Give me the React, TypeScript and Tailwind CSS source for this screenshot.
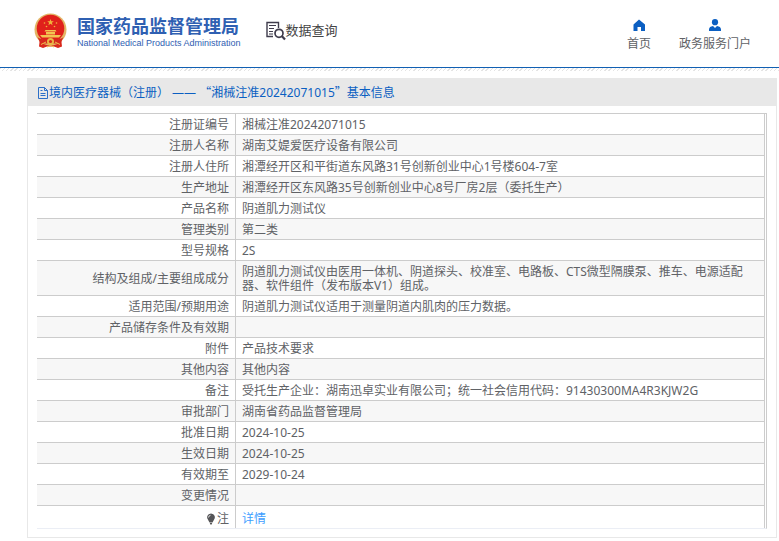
import type { ReactNode } from "react";

type Row = {
   label: string;
   value?: ReactNode;
};

const rows: Row[] = [
   { label: "注册证编号", value: "湘械注准20242071015" },
   { label: "注册人名称", value: "湖南艾媞爱医疗设备有限公司" },
   { label: "注册人住所", value: "湘潭经开区和平街道东风路31号创新创业中心1号楼604-7室" },
   { label: "生产地址", value: "湘潭经开区东风路35号创新创业中心8号厂房2层（委托生产）" },
   { label: "产品名称", value: "阴道肌力测试仪" },
   { label: "管理类别", value: "第二类" },
   { label: "型号规格", value: "2S" },
   { label: "结构及组成/主要组成成分", value: "阴道肌力测试仪由医用一体机、阴道探头、校准室、电路板、CTS微型隔膜泵、推车、电源适配器、软件组件（发布版本V1）组成。" },
   { label: "适用范围/预期用途", value: "阴道肌力测试仪适用于测量阴道内肌肉的压力数据。" },
   { label: "产品储存条件及有效期" },
   { label: "附件", value: "产品技术要求" },
   { label: "其他内容", value: "其他内容" },
   { label: "备注", value: "受托生产企业：湖南迅卓实业有限公司；统一社会信用代码：91430300MA4R3KJW2G" },
   { label: "审批部门", value: "湖南省药品监督管理局" },
   { label: "批准日期", value: "2024-10-25" },
   { label: "生效日期", value: "2024-10-25" },
   { label: "有效期至", value: "2029-10-24" },
   { label: "变更情况" },
];

const Emblem = () => (
   <svg viewBox="0 0 34 36" className="w-[34px] h-9 shrink-0" aria-hidden="true">
      <path d="M6 25h21l1 8.500-4 1.500-4-1.500h-7L9 35l-4-1.500z" fill="#d9281c" />
      <circle cx="16.500" cy="16.500" r="16" fill="#e3b565" />
      <circle cx="16.500" cy="15.500" r="13.800" fill="#e0201b" />
      <path d="M16.500 6l.9 2.300h2.400l-1.900 1.500.7 2.400-2.100-1.400-2.100 1.400.7-2.400-1.900-1.500h2.400z" fill="#f0b43c" />
      <circle cx="10.500" cy="10" r=".8" fill="#f0b43c" />
      <circle cx="22.500" cy="10" r=".8" fill="#f0b43c" />
      <circle cx="12.500" cy="13.500" r=".8" fill="#f0b43c" />
      <circle cx="20.500" cy="13.500" r=".8" fill="#f0b43c" />
      <path d="M11.500 17h10l1 1.500h-12zM12 19h9v2.500h-9zM6 22h21l-2 2.500H8z" fill="#f2c552" />
      <path d="M3.500 24c4 3.500 8 2 13 2s9 1.500 13-2l-3 6.500H6.500z" fill="#d6281d" />
      <circle cx="16.500" cy="28.500" r="3.500" fill="#e8b846" />
      <circle cx="16.500" cy="28.500" r="1.600" fill="#d9281c" />
      <path d="M7 31.500l5-2.500M26 31.500l-5-2.500M13 34l3.500-1.500L20 34" stroke="#efbf4b" strokeWidth="1" fill="none" />
   </svg>
);

const SearchDocIcon = () => (
   <svg viewBox="0 0 20 20" className="w-5 h-5 shrink-0" fill="none" stroke="#3f3c4c" aria-hidden="true">
      <path d="M12.500 7V1.500H1V15.500H7" strokeWidth="1.400" />
      <path d="M3 4.500h7M3 7.500h5M3 10.500h4M3 13h4" strokeWidth="1" />
      <circle cx="13" cy="12.300" r="4" strokeWidth="1.700" />
      <path d="M16 15.300L19 18.500" strokeWidth="2.200" />
   </svg>
);

const HomeIcon = () => (
   <svg viewBox="0 0 12 12" className="w-3 h-3" fill="#0b5fc2" aria-hidden="true">
      <path d="M6 .5L12 5.500V12H8V8H4.500v4H.5V5.500z" />
   </svg>
);

const UserIcon = () => (
   <svg viewBox="0 0 12 12" className="w-3 h-3" fill="#0b5fc2" aria-hidden="true">
      <circle cx="6" cy="3.200" r="3.100" />
      <path d="M0 12V10.500C0 8.500 1.500 7.300 4 7l2 2 2-2c2.500.3 4 1.500 4 3.500V12z" />
   </svg>
);

const DocIcon = () => (
   <svg viewBox="0 0 12 12" className="w-3 h-3 shrink-0" fill="none" stroke="#2c6fc8" aria-hidden="true">
      <path d="M1.500 .5h6l3 3v8h-9zM7.500 .5v3h3M3.500 3.500h2M3.500 6.500h5M3.500 8.500h5" />
   </svg>
);

const BulbIcon = () => (
   <svg viewBox="0 0 10 12" className="w-[10px] h-3" aria-hidden="true">
      <path d="M5 .5a4 4 0 0 1 2.600 7L6.500 9.500h-3L2.400 7.500A4 4 0 0 1 5 .5zM3.800 10h2.400l-.5 1.500H4.300z" fill="#555558" />
      <path d="M2.500 4.500A2.500 2.500 0 0 1 4.500 2.300" stroke="#ddd" fill="none" />
   </svg>
);

const TableRow = ({ head, children, last = false }: { head: ReactNode; children?: ReactNode; last?: boolean }) => {
   const border = last ? "border-r border-[#ccc] pt-[6px] pb-[2px]" : "border-r border-b border-[#ccc] pt-1 pb-[2px]";

   return (
      <tr className={last ? "h-[22px]" : "h-[21px] even:bg-[#f7f7f7]"}>
         <th scope="row" className={`w-[199px] pr-[6px] text-right font-normal ${border}`}>{head}</th>
         <td className={`pl-[6px] pr-3 ${border}`}>{children}</td>
      </tr>
   )
};

const App = () => {
   return (
      <div className="min-h-screen bg-white text-xs text-[#606266] font-['Noto_Sans','Noto_Sans_CJK_SC',sans-serif]">
         <header className="flex h-[68px] items-center justify-between border-b border-[#1160b3] pl-[34px] pr-7 pb-[6px]">
            <div className="flex items-center">
               <Emblem />
               <div className="ml-[9px] flex flex-col text-[#2f60b2]">
                  <h1 className="text-lg leading-[26px] font-bold whitespace-nowrap font-['Noto_Sans_CJK_SC',sans-serif]">国家药品监督管理局</h1>
                  <p className="text-[9px] leading-[11px] whitespace-nowrap font-['Liberation_Sans',sans-serif]">National Medical Products Administration</p>
               </div>
               <div className="ml-[25px] flex items-center">
                  <SearchDocIcon />
                  <h2 className="text-[13px] leading-5 pb-[2px] text-[#444] whitespace-nowrap font-['Noto_Sans_CJK_SC',sans-serif]">数据查询</h2>
               </div>
            </div>
            <nav className="flex gap-7 pt-[10px]">
               <a href="#home" className="flex flex-col items-center gap-1">
                  <HomeIcon />
                  <span className="leading-[18px]">首页</span>
               </a>
               <a href="#portal" className="flex flex-col items-center gap-1">
                  <UserIcon />
                  <span className="leading-[18px]">政务服务门户</span>
               </a>
            </nav>
         </header>
         <div className="h-[3px] bg-[repeating-linear-gradient(135deg,#e4e4e4_0px,#e4e4e4_1px,#fff_1px,#fff_3px)]" />

         <main className="mt-[7px] ml-[27px] mr-[2px] border border-[#e8e8e8]">
            <div className="flex h-[27px] items-center bg-[#e8e8e8] pl-[9px] text-[#0b5fc2]">
               <DocIcon />
               <span className="whitespace-pre">
                  境内医疗器械（注册） ——{" "}
                  <span className="font-['Noto_Sans_CJK_SC',sans-serif]">“</span>
                  湘械注准20242071015
                  <span className="font-['Noto_Sans_CJK_SC',sans-serif]">”</span>
                  基本信息
               </span>
            </div>
            <div className="mt-[7px] mb-2 ml-[9px] mr-[9px] border-t border-r border-b border-t-[#ccc] border-r-[#ccc] border-b-[#ebeef5] pr-px">
               <table className="w-full table-fixed border-separate border-spacing-0 leading-[14px]">
                  <tbody>
                     {rows.map((row) => (
                        <TableRow key={row.label} head={row.label}>{row.value}</TableRow>
                     ))}
                     <TableRow last head={<span className="flex items-center justify-end gap-px"><BulbIcon />注</span>}>
                        <a href="#detail" className="text-[#409eff]">详情</a>
                     </TableRow>
                  </tbody>
               </table>
            </div>
         </main>
      </div>
   )
}

export default App;
